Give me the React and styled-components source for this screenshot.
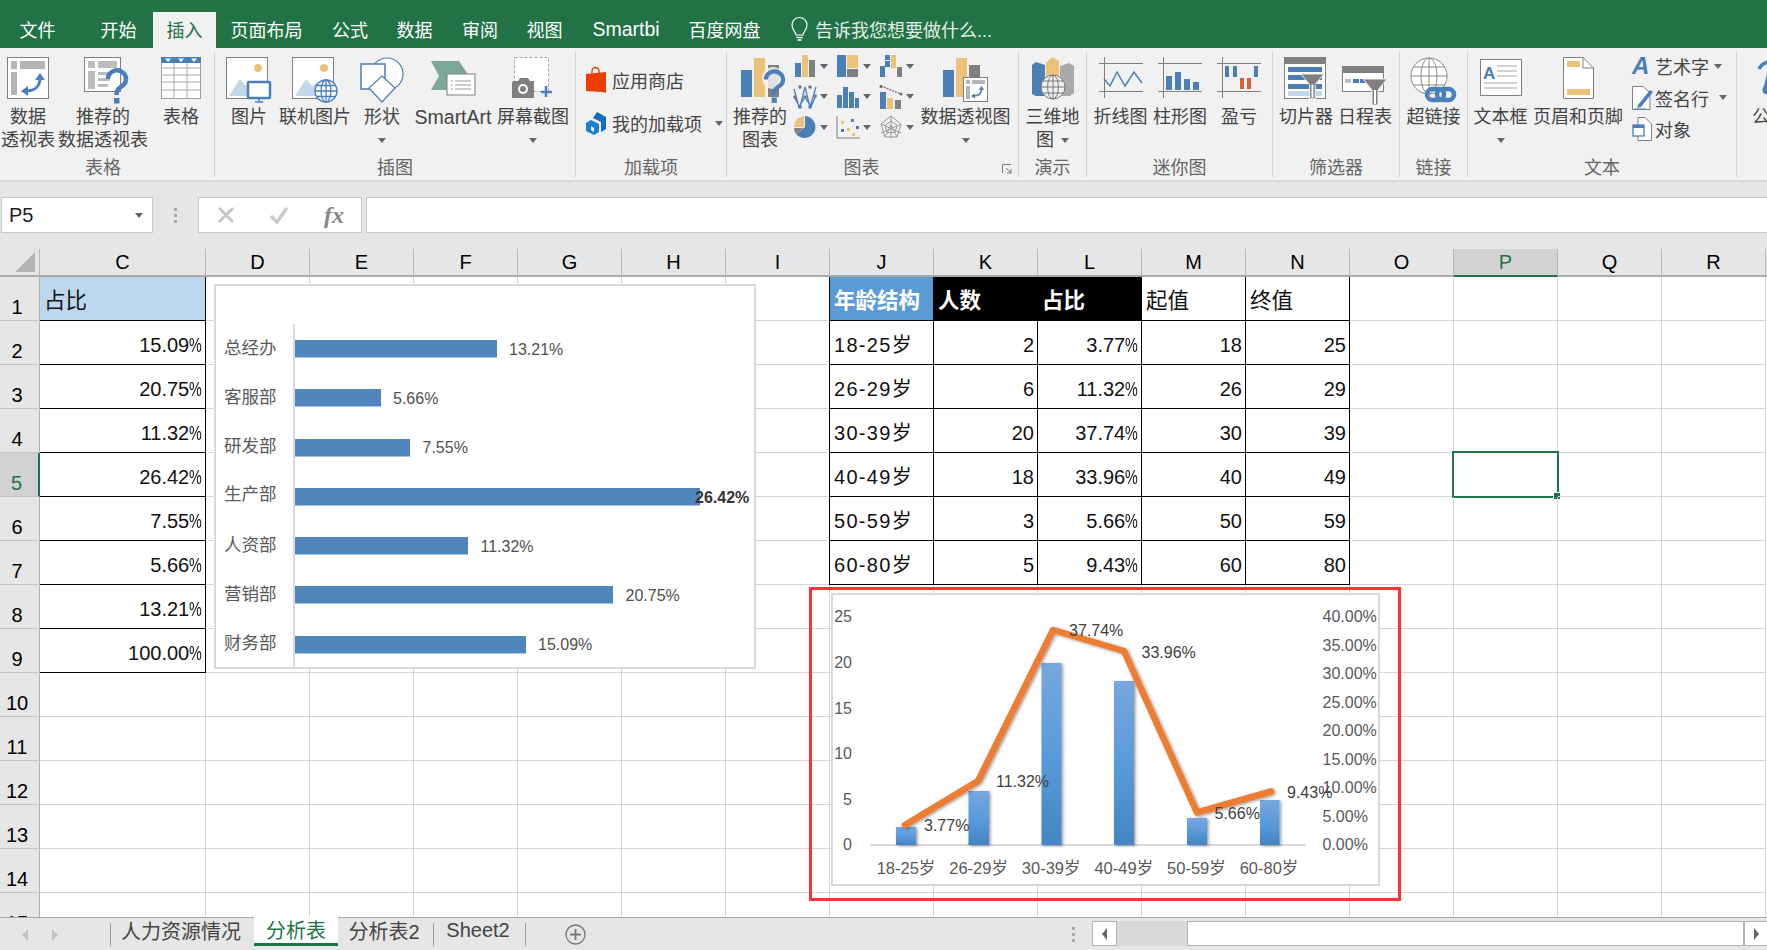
import React from 'react';
import styled, { createGlobalStyle } from 'styled-components';

const FONT = `"Liberation Sans","Noto Sans CJK SC",sans-serif`;
const GREEN = '#217346';
const BLUE = '#4a7fb8';
const TAN = '#ecc278';
const GRAY = '#7f7f7f';
const LIGHT = '#c3d6ea';

const Global = createGlobalStyle`
  html, body { margin: 0; padding: 0; height: 100%; overflow: hidden; background: #fff; }
  body { font-family: ${FONT}; }
  #root { height: 100%; }
`;

const Page = styled.div`
  width: 1767px; height: 950px; display: flex; flex-direction: column; overflow: hidden;
`;

/* ---- title tabs ---- */
const TabStrip = styled.div`
  height: 48px; flex: none; background: ${GREEN}; display: flex; align-items: flex-end;
`;
const MenuTab = styled.div`
  height: 36px; width: ${p => p.$w}px; padding-left: ${p => p.$pad || 0}px; box-sizing: border-box;
  display: flex; align-items: center; justify-content: center; font-size: ${p => (p.$latin ? 19.5 : 18)}px; padding-bottom: ${p => (p.$latin ? 2 : 3)}px;
  color: ${p => (p.$active ? GREEN : '#fff')};
  background: ${p => (p.$active ? '#f1f1f1' : 'transparent')};
`;
const TellMe = styled.div`
  margin-left: 19px; height: 36px; padding-bottom: 2px; box-sizing: border-box; display: flex; align-items: center; gap: 7px;
  color: #e3eee8; font-size: 18px; white-space: nowrap;
`;

/* ---- ribbon ---- */
const Ribbon = styled.div`
  height: 134px; flex: none; box-sizing: border-box; background: #f1f1f1; border-bottom: 2px solid #d8d8d8;
  padding: 4px 0 3px; display: flex; overflow: hidden; color: #444;
`;
const Group = styled.div`
  width: ${p => p.$w}px; flex: none; box-sizing: border-box; display: flex; flex-direction: column;
  border-right: ${p => (p.$last ? 'none' : '1.5px solid #d4d4d4')}; position: relative;
`;
const GroupBody = styled.div`
  flex: 1; display: flex; padding-left: ${p => p.$pad || 0}px; min-height: 0;
`;
const GroupLabel = styled.div`
  height: 28px; font-size: 18px; line-height: 1; color: #666; display: flex; align-items: center; justify-content: center;
  padding-right: ${p => p.$shift || 0}px; padding-top: 9px; box-sizing: border-box; flex: none;
`;
const Launcher = styled.svg`
  position: absolute; right: 6px; bottom: 3px;
`;
const Item = styled.div`
  width: ${p => p.$w}px; flex: none; display: flex; flex-direction: column; align-items: center;
  padding-top: 5px; box-sizing: border-box;
`;
const IconSlot = styled.div`
  height: 49px; display: flex; align-items: flex-start; justify-content: center; flex: none;
`;
const ItemLine = styled.div`
  height: 23px; line-height: 23px; font-size: ${p => (p.$latin ? 19.5 : 18)}px; white-space: nowrap; display: flex; align-items: center; gap: 7px;
  flex: none;
`;
const Caret = styled.span`
  display: inline-block; width: 0; height: 0; flex: none;
  border-left: 4px solid transparent; border-right: 4px solid transparent; border-top: 5px solid #666;
`;
const AddinStack = styled.div`
  display: flex; flex-direction: column; gap: 13px; padding-top: 13px;
`;
const SideRow = styled.div`
  height: 30px; display: flex; align-items: center; gap: 5px; font-size: 18px; white-space: nowrap;
`;
const SideCaret = styled(Caret)`
  margin-left: ${p => p.$gap || 8}px;
`;
const TextStack = styled.div`
  display: flex; flex-direction: column; gap: 3.5px; padding-left: 9px;
`;
const TextRow = styled.div`
  height: 28px; display: flex; align-items: center; font-size: 18px; white-space: nowrap;
`;
const TextIcon = styled.div`
  width: 23px; margin-right: 0; flex: none; display: flex; justify-content: flex-start;
`;
const ChartGrid = styled.div`
  width: 129px; flex: none; display: grid; grid-template-columns: repeat(3, 43px); grid-auto-rows: 30.5px;
  margin-top: -1px;
`;
const ChartCell = styled.div`
  display: flex; align-items: center; gap: 3px;
`;

/* ---- formula bar ---- */
const FormulaBand = styled.div`
  height: 67px; flex: none; box-sizing: border-box; background: #e6e6e6; padding: 15px 0 16px 1px; display: flex;
`;
const NameBox = styled.div`
  width: 152px; box-sizing: border-box; background: #fff; border: 1px solid #c8c8c8; font-size: 20px; color: #222;
  display: flex; align-items: center; justify-content: space-between; padding: 0 9px 0 7px;
`;
const BarDots = styled.div`
  width: 45px; display: flex; flex-direction: column; align-items: center; justify-content: center; gap: 3px;
`;
const BarDot = styled.i`
  width: 3px; height: 3px; background: #a8a8a8; display: block;
`;
const FxBox = styled.div`
  width: 164px; box-sizing: border-box; background: #fff; border: 1px solid #c8c8c8; display: flex; align-items: center;
  padding-left: 19px; gap: 35px; margin-right: 4px;
`;
const FxLabel = styled.span`
  font-family: "Liberation Serif", serif; font-style: italic; font-weight: 700; font-size: 24px; color: #888;
`;
const FormulaInput = styled.div`
  flex: 1; background: #fff; border: 1px solid #c8c8c8; border-right: none;
`;

/* ---- column headers ---- */
const ColumnBar = styled.div`
  height: 28px; flex: none; box-sizing: border-box; display: flex; background: #e6e6e6; border-bottom: 2px solid #a9a9a9;
`;
const Corner = styled.div`
  width: 40px; flex: none; box-sizing: border-box; border-right: 1px solid #b8b8b8; display: flex; align-items: flex-end;
  justify-content: flex-end; padding: 0 4px 3px 0;
`;
const ColHead = styled.div`
  width: ${p => p.$w}px; flex: none; box-sizing: border-box; display: flex; align-items: center; justify-content: center;
  font-size: 20px; border-right: 1px solid #b8b8b8; margin-bottom: ${p => (p.$sel ? '-2px' : '0')};
  color: ${p => (p.$sel ? GREEN : '#000')}; background: ${p => (p.$sel ? '#d2d2d2' : 'transparent')};
  border-bottom: ${p => (p.$sel ? `2px solid ${GREEN}` : 'none')};
`;

/* ---- sheet ---- */
const Sheet = styled.div`
  position: relative; flex: 1; min-height: 0; overflow: hidden; background: #fff;
`;
const Grid = styled.div`
  display: grid; grid-template-columns: 40px 166px repeat(15, 104px); grid-auto-rows: 44px;
`;
const RowHead = styled.div`
  box-sizing: border-box; background: ${p => (p.$sel ? '#d2d2d2' : '#e6e6e6')}; color: ${p => (p.$sel ? GREEN : '#000')};
  border-bottom: 1px solid #c4c4c4; border-right: ${p => (p.$sel ? `2px solid ${GREEN}` : '1px solid #b0b0b0')};
  font-size: 20px; line-height: 20px; display: flex; align-items: flex-end; justify-content: center; padding: 0 5px 3px 0;
`;
const Cell = styled.div`
  box-sizing: border-box; position: relative; font-size: 20px; white-space: nowrap; overflow: visible;
  display: flex; align-items: center; padding: ${p => (p.$head ? 0 : p.$spaced ? 2 : 6)}px 3px 0 4px;
  justify-content: ${p => (p.$right ? 'flex-end' : 'flex-start')};
  background: ${p => p.$fill || 'transparent'}; color: ${p => p.$color || '#111'};
  font-weight: ${p => (p.$bold ? 700 : 400)};
  letter-spacing: ${p => (p.$spaced ? '1.3px' : '0')};
  border-right: 1px solid ${p => (p.$box ? '#000' : '#d6d6d6')};
  border-bottom: 1px solid ${p => (p.$box ? '#000' : '#d6d6d6')};
  box-shadow: ${p => (p.$edge ? '-1px 0 0 #000' : 'none')};
`;
const HeadText = styled.span`
  font-size: 21.5px;
`;
const Pct = styled.span`
  display: inline-block; transform: scaleX(0.72); transform-origin: right center; margin-left: -5px;
`;
const Selection = styled.div`
  position: absolute; left: -2px; top: -2px; right: -2px; bottom: -2px; border: 2px solid ${GREEN};
`;
const Handle = styled.div`
  position: absolute; right: -4px; bottom: -4px; width: 6px; height: 6px; background: ${GREEN}; border: 1px solid #fff;
`;
const BarCard = styled.div`
  position: absolute; left: 214px; top: 7px; width: 542px; height: 385px; box-sizing: border-box;
  background: #fff; border: 2px solid #d9d9d9;
`;
const RedFrame = styled.div`
  position: absolute; left: 809px; top: 310px; width: 592px; height: 314px; box-sizing: border-box;
  border: 3px solid #ff3333; padding: 3px 18px 12px 19px; display: flex;
`;
const ComboCard = styled.div`
  flex: 1; box-sizing: border-box; background: #fff; border: 2px solid #d9d9d9;
`;
const ChartSvg = styled.svg`
  display: block;
`;
const ChartText = styled.text`
  font-family: ${FONT}; font-size: ${p => p.$size || 16}px; fill: ${p => p.$fill || '#595959'};
  font-weight: ${p => (p.$bold ? 700 : 400)}; dominant-baseline: central;
`;

/* ---- bottom bar ---- */
const BottomBar = styled.div`
  height: 33px; flex: none; box-sizing: border-box; background: #e6e6e6; border-top: 1px solid #a9a9a9; display: flex;
  align-items: flex-start;
`;
const TabNav = styled.div`
  width: 110px; height: 29px; flex: none; box-sizing: border-box; display: flex; align-items: center; padding: 5px 0 0 22px; gap: 24px;
`;
const NavArrow = styled.i`
  display: block; width: 0; height: 0; border-top: 6px solid transparent; border-bottom: 6px solid transparent;
  ${p => (p.$right ? 'border-left: 6px solid #c4c4c4;' : 'border-right: 6px solid #c4c4c4;')}
`;
const SheetTab = styled.div`
  width: ${p => p.$w}px; flex: none; box-sizing: border-box; height: 29px; display: flex; align-items: center; justify-content: center;
  font-size: 20px; padding-bottom: ${p => (p.$active ? 1 : 5)}px; padding-right: ${p => (p.$active ? 0 : 3)}px; white-space: nowrap;
  color: ${p => (p.$active ? GREEN : '#444')}; background: ${p => (p.$active ? '#fff' : 'transparent')};
  border-bottom: ${p => (p.$active ? `3px solid ${GREEN}` : 'none')};
  margin-top: ${p => (p.$active ? '-1px' : '0')}; 
`;
const TabRule = styled.i`
  display: block; width: 1px; height: 23px; margin-top: 5px; background: #9d9d9d; flex: none;
`;
const AddSheet = styled.svg`
  margin: 6px 0 0 39px; flex: none;
`;
const ScrollArea = styled.div`
  margin-left: auto; display: flex; align-items: flex-start; height: 100%;
`;
const ScrollDots = styled.div`
  width: 38px; display: flex; flex-direction: column; align-items: center; gap: 3px; margin-top: 9px; padding-right: 0;
`;
const ScrollTrack = styled.div`
  width: 675px; height: 25px; margin-top: 3px; display: flex; box-sizing: border-box;
`;
const ScrollBtn = styled.div`
  width: ${p => p.$w}px; flex: none; box-sizing: border-box; background: #fff; border: 1px solid #b4b4b4; display: flex;
  align-items: center; justify-content: center; border-right-width: ${p => (p.$end ? 0 : 1)}px;
`;
const ScrollThumb = styled.div`
  width: 70px; flex: none; background: #d9d9d9;
`;
const ScrollRest = styled.div`
  flex: 1; background: #fff; border: 1px solid #b4b4b4;
`;
const ScrollArrow = styled.i`
  display: block; width: 0; height: 0; border-top: 6px solid transparent; border-bottom: 6px solid transparent;
  ${p => (p.$right ? 'border-left: 5px solid #666;' : 'border-right: 5px solid #666;')}
`;

/* ---- icons ---- */
const Sv = ({ w, h, children }) => (
  <svg width={w} height={h} viewBox={`0 0 ${w} ${h}`} fill="none" overflow="visible">{children}</svg>
);
const Globe = ({ cx, cy, r, stroke, fill = '#fff', sw = 1 }) => (
  <g stroke={stroke} strokeWidth={sw} fill="none">
    <circle cx={cx} cy={cy} r={r} fill={fill} />
    <ellipse cx={cx} cy={cy} rx={r * 0.45} ry={r} />
    <path d={`M${cx} ${cy - r}V${cy + r}M${cx - r} ${cy}H${cx + r}M${cx - r * 0.85} ${cy - r * 0.5}H${cx + r * 0.85}M${cx - r * 0.85} ${cy + r * 0.5}H${cx + r * 0.85}`} />
  </g>
);
const Swap = ({ x = 0, y = 0, s = 1 }) => (
  <g transform={`translate(${x} ${y}) scale(${s})`}>
    <path d="M19 5C19 13 14 18 5 18" stroke={BLUE} strokeWidth="3" />
    <path d="M19 0l5 7H14zM0 18l7-5v10z" fill={BLUE} />
  </g>
);
const PivotIcon = () => (
  <Sv w={42} h={43}>
    <rect x=".5" y=".5" width="41" height="41" fill="#fff" stroke={GRAY} />
    <path d="M4 4h6v8H4zM13 4h25v8H13zM4 15h6v23H4z" fill="#b5b5b5" />
    <Swap x={14} y={16} />
  </Sv>
);
const Question = ({ x = 0, y = 0, s = 1 }) => (
  <g transform={`translate(${x} ${y}) scale(${s})`}>
    <path d="M2 10a9 8.5 0 1 1 14 7c-4 3-5.500 4-5.500 9" stroke={BLUE} strokeWidth="4.500" />
    <rect x="8" y="29" width="5.500" height="5.500" fill={BLUE} />
  </g>
);
const RecPivotIcon = () => (
  <Sv w={38} h={45}>
    <rect x=".5" y=".5" width="36" height="34" fill="#fff" stroke={GRAY} />
    <path d="M4 4h7v7H4zM14 4h19v7H14zM4 14h7v18H4zM14 15h14v3H14zM14 21h12v3H14zM14 27h10v3H14z" fill="#bcbcbc" />
    <Question x={22} y={12} />
  </Sv>
);
const TableIcon = () => (
  <Sv w={40} h={43}>
    <rect x=".5" y=".5" width="39" height="41" fill="#fff" stroke="#9a9a9a" />
    <path d="M0 11H40M0 18H40M0 25H40M0 33H40M13 6V42M26 6V42" stroke="#a8a8a8" />
    <rect width="40" height="6" fill={BLUE} />
    <path d="M4 1.500h6l-3 3.500zM17 1.500h6l-3 3.500zM30 1.500h6l-3 3.500z" fill="#fff" />
  </Sv>
);
const PhotoBase = () => (
  <>
    <rect x=".5" y=".5" width="41" height="41" fill="#fff" stroke={GRAY} />
    <circle cx="32" cy="11" r="4" fill={TAN} />
    <path d="M3 39l11-17 6 7 5-4 12 14z" fill={LIGHT} />
  </>
);
const PictureIcon = () => (
  <Sv w={46} h={46}>
    <PhotoBase />
    <rect x="22" y="25" width="22" height="16" rx="1" fill="#fff" stroke={BLUE} strokeWidth="2.500" />
    <path d="M33 41v3M29 45h8" stroke={BLUE} strokeWidth="1.500" />
  </Sv>
);
const OnlineIcon = () => (
  <Sv w={46} h={46}>
    <PhotoBase />
    <Globe cx={34} cy={34} r={11} stroke={BLUE} sw={1.300} />
  </Sv>
);
const ShapesIcon = () => (
  <Sv w={45} h={45}>
    <circle cx="27" cy="17" r="16" fill="#fff" stroke={BLUE} strokeWidth="1.200" />
    <rect x="1" y="7" width="24" height="25" fill="#fff" stroke={BLUE} strokeWidth="1.500" />
    <path d="M22 19l13 12-13 14-13-14z" fill="#fff" stroke={BLUE} strokeWidth="1.200" />
  </Sv>
);
const SmartArtIcon = () => (
  <Sv w={45} h={40}>
    <path d="M0 4h28l10 15H32v14H0l8-14z" fill="#7ba898" />
    <rect x="16" y="17" width="28" height="21" fill="#fff" stroke={GRAY} />
    <path d="M20 24h2M24 24h16M20 28h2M24 28h16M20 32h2M24 32h16" stroke="#9a9a9a" />
  </Sv>
);
const ScreenshotIcon = () => (
  <Sv w={42} h={42}>
    <rect x="2.500" y=".5" width="34" height="34" fill="#fff" stroke="#a8a8a8" strokeDasharray="3 2" />
    <path d="M0 26a2 2 0 0 1 2-2h4l2-3h8l2 3h4v17H0z" fill="#808080" />
    <circle cx="11" cy="32" r="5" fill="#fff" />
    <circle cx="11" cy="32" r="3" fill="#808080" />
    <path d="M34 29V40M29 35H40" stroke={BLUE} strokeWidth="2.500" />
  </Sv>
);
const StoreIcon = () => (
  <Sv w={21} h={26}>
    <path d="M0 7l20-2v21l-4-1-16-1z" fill="#ea3e00" />
    <path d="M6 7V4a3.500 3.500 0 0 1 7 0v3" stroke="#ea3e00" strokeWidth="1.300" />
  </Sv>
);
const AddinIcon = () => (
  <Sv w={21} h={23}>
    <path d="M11 0l9 5v12l-5 3V10L7 6z" fill="#0f6cbd" />
    <path d="M5 8l8 4v8l-5 3-8-4v-8z" fill="#1a7fd0" />
    <path d="M5 14l3 2v4l-3-2z" fill="#f1f1f1" />
  </Sv>
);
const RecChartIcon = () => (
  <Sv w={40} h={46}>
    <rect x="1" y="13" width="11" height="27" fill={BLUE} />
    <rect x="14" y="1" width="11" height="39" fill={TAN} />
    <rect x="28" y="8" width="11" height="32" fill={GRAY} />
    <circle cx="33" cy="21" r="11" fill="#f1f1f1" opacity=".85" />
    <Question x={24} y={13} s={0.95} />
  </Sv>
);
const ColChart = () => (
  <Sv w={24} h={24}>
    <rect x="2" y="9" width="6" height="14" fill={BLUE} /><rect x="9" y="1" width="6" height="22" fill={TAN} /><rect x="16" y="6" width="6" height="17" fill={GRAY} />
  </Sv>
);
const TreeChart = () => (
  <Sv w={24} h={24}>
    <rect x="1" y="1" width="9" height="22" fill={BLUE} /><rect x="11" y="1" width="11" height="13" fill={TAN} /><rect x="11" y="15" width="11" height="8" fill={GRAY} />
  </Sv>
);
const FallChart = () => (
  <Sv w={24} h={24}>
    <rect x="1" y="12" width="5" height="11" fill={BLUE} /><rect x="6" y="7" width="5" height="6" fill={BLUE} /><rect x="6" y="1" width="5" height="5" fill={BLUE} /><rect x="12" y="1" width="5" height="13" fill={TAN} /><rect x="18" y="13" width="5" height="10" fill={GRAY} />
  </Sv>
);
const LinkChart = () => (
  <Sv w={24} h={24}>
    <path d="M1 12l6 10 5-20 5 20 6-20M1 4l5 18 6-10 6 10 5-12" stroke={BLUE} strokeWidth="1.300" />
    <g fill="#777"><circle cx="2" cy="12" r="1.800" /><circle cx="7" cy="2" r="1.800" /><circle cx="17" cy="2" r="1.800" /><circle cx="22" cy="11" r="1.800" /><circle cx="12" cy="12" r="1.800" /></g>
    <g fill={BLUE}><circle cx="7" cy="22" r="1.800" /><circle cx="17" cy="22" r="1.800" /></g>
  </Sv>
);
const HistChart = () => (
  <Sv w={24} h={24}>
    <rect x="1" y="10" width="5" height="13" fill={BLUE} /><rect x="7" y="2" width="5" height="21" fill={BLUE} /><rect x="13" y="7" width="5" height="16" fill={BLUE} /><rect x="19" y="13" width="4" height="10" fill={BLUE} />
  </Sv>
);
const ParetoChart = () => (
  <Sv w={24} h={24}>
    <rect x="1" y="7" width="6" height="17" fill={BLUE} /><rect x="8" y="13" width="6" height="11" fill={TAN} /><rect x="16" y="15" width="6" height="9" fill={GRAY} />
    <path d="M2 1L22 9" stroke="#666" strokeWidth="1.200" strokeDasharray="2 1" />
    <circle cx="2" cy="1.500" r="1.500" fill="#666" /><circle cx="22" cy="9" r="1.500" fill="#666" />
  </Sv>
);
const PieChart = () => (
  <Sv w={24} h={24}>
    <path d="M12 1a11 11 0 1 1-9 18l9-7z" fill={BLUE} />
    <path d="M11 1A11 11 0 0 0 1 12h10z" fill={TAN} />
    <path d="M1 13h9l-7 6a11 11 0 0 1-2-6z" fill={GRAY} />
  </Sv>
);
const ScatterChart = () => (
  <Sv w={24} h={24}>
    <path d="M1 1V23H24" stroke={GRAY} />
    <g fill={TAN}><rect x="5" y="6" width="3" height="3" /><rect x="11" y="13" width="3" height="3" /><rect x="16" y="18" width="3" height="3" /></g>
    <g fill={BLUE}><rect x="15" y="4" width="3" height="3" /><rect x="5" y="14" width="3" height="3" /><rect x="20" y="11" width="3" height="3" /></g>
  </Sv>
);
const RadarChart = () => (
  <Sv w={24} h={24}>
    <g stroke="#999" strokeWidth="1">
      <path d="M12 1l10 8-4 13H6L2 9z" />
      <path d="M12 6l6 4.500-2 7H8l-2-7z" />
      <path d="M12 1v22M2 9l20 9M22 9L2 18M6 22L12 10l6 12" />
    </g>
  </Sv>
);
const PivotChartIcon = () => (
  <Sv w={46} h={46}>
    <rect x="0" y="13" width="11" height="27" fill={BLUE} />
    <rect x="13" y="1" width="11" height="39" fill={TAN} />
    <rect x="26" y="8" width="11" height="32" fill={GRAY} />
    <rect x="20.500" y="20.500" width="24" height="24" fill="#fff" stroke={GRAY} />
    <path d="M23 23h4v4h-4zM29 23h13v4H29zM23 29h4v13h-4z" fill="#b5b5b5" />
    <Swap x={28} y={29} s={0.55} />
  </Sv>
);
const MapIcon = () => (
  <Sv w={42} h={43}>
    <path d="M0 8l4-3 9 3v31H4l-4-2z" fill={BLUE} />
    <path d="M14 6l6-6 7 4v27H14z" fill={TAN} />
    <path d="M28 9l9-3 5 3v27l-4 3H28z" fill="#a9a9a9" />
    <Globe cx={21} cy={30} r={12} stroke="#777" fill="#f1f1f1" />
  </Sv>
);
const SparkFrame = () => (
  <path d="M0 6.500H44M0 34.500H44M5.500 0V41" stroke={GRAY} />
);
const LineSpark = () => (
  <Sv w={44} h={42}>
    <SparkFrame />
    <path d="M5 22l6 7 7-14 8 14 9-14 8 11" stroke={BLUE} strokeWidth="1.500" />
  </Sv>
);
const ColSpark = () => (
  <Sv w={44} h={42}>
    <SparkFrame />
    <path d="M8 19h6v14H8zM17 15h6v18h-6zM26 22h6v11h-6zM35 25h6v8h-6z" fill={BLUE} />
  </Sv>
);
const WinSpark = () => (
  <Sv w={44} h={42}>
    <SparkFrame />
    <path d="M8 9h4v11H8zM16 9h4v11h-4zM37 9h4v11h-4z" fill={BLUE} />
    <path d="M23 21h4v11h-4zM30 21h4v11h-4z" fill="#d9603b" />
  </Sv>
);
const Funnel = ({ x, y, s = 1 }) => (
  <g transform={`translate(${x} ${y}) scale(${s})`}>
    <path d="M0 0H24L15 11V26H9V11z" fill={GRAY} stroke="#f1f1f1" />
    <path d="M11 11V25H13V11z" fill="#fff" />
  </g>
);
const SlicerIcon = () => (
  <Sv w={44} h={43}>
    <rect x=".5" y=".5" width="41" height="41" fill="#fff" stroke={GRAY} />
    <rect width="42" height="7" fill={GRAY} />
    <path d="M4 10h34v5H4zM4 18h34v5H4zM4 27h34v5H4z" fill={BLUE} />
    <rect x="4" y="34" width="34" height="5" fill={LIGHT} />
    <Funnel x={17} y={17} s={0.95} />
  </Sv>
);
const TimelineIcon = () => (
  <Sv w={46} h={47}>
    <rect x=".5" y="9.500" width="41" height="25" fill="#fff" stroke={GRAY} />
    <rect y="9" width="42" height="7" fill={GRAY} />
    <path d="M3 22h6v4H3zM26 22h6v4h-6zM34 22h6v4h-6z" fill="#bcbcbc" />
    <path d="M11 22h6v4h-6zM18 22h6v4h-6z" fill={BLUE} />
    <Funnel x={21} y={22} />
  </Sv>
);
const LinkIcon = () => (
  <Sv w={48} h={47}>
    <Globe cx={19} cy={19} r={18} stroke="#8a8a8a" fill="#fff" />
    <g stroke={BLUE} strokeWidth="4.500" fill="none">
      <rect x="17" y="32" width="17" height="11" rx="5.500" />
      <rect x="27" y="32" width="17" height="11" rx="5.500" />
    </g>
  </Sv>
);
const IconLetter = styled.text`
  font-family: ${FONT}; font-weight: 700; fill: ${BLUE}; font-size: ${p => p.$size}px;
  font-style: ${p => (p.$italic ? 'italic' : 'normal')};
`;
const TextBoxIcon = () => (
  <Sv w={42} h={42}>
    <rect x=".5" y="2.500" width="41" height="36" fill="#fff" stroke={GRAY} />
    <IconLetter x="3" y="22" $size={17}>A</IconLetter>
    <path d="M17 9H37M17 14H37M17 19H37M4 26H37M4 31H37" stroke="#a5a5a5" />
  </Sv>
);
const HeaderFooterIcon = () => (
  <Sv w={31} h={43}>
    <path d="M.5.5H20L30.500 11V41.500H.5z" fill="#fff" stroke={GRAY} />
    <path d="M20 .5V11H30.500" stroke={GRAY} />
    <rect x="4" y="4" width="13" height="6" fill={TAN} />
    <rect x="4" y="32" width="23" height="6" fill={TAN} />
  </Sv>
);
const ArtIcon = () => (
  <Sv w={20} h={24}>
    <IconLetter x="0" y="20" $size={24} $italic>A</IconLetter>
  </Sv>
);
const SignIcon = () => (
  <Sv w={22} h={24}>
    <path d="M.5.5H11L18 7V23.500H.5z" fill="#fff" stroke={GRAY} />
    <path d="M6 19L18 4l3 2L9 21l-4 1z" fill={BLUE} />
    <path d="M2 23H14" stroke={BLUE} />
  </Sv>
);
const ObjectIcon = () => (
  <Sv w={20} h={24}>
    <path d="M6 .5H13L19.500 7V23.500H6z" fill="#fff" stroke={GRAY} />
    <rect x="1" y="8" width="11" height="11" fill="#fff" stroke={BLUE} strokeWidth="1.300" />
    <rect x="1" y="8" width="11" height="3" fill={BLUE} />
  </Sv>
);
const PiSlot = styled.div`
  align-self: flex-start; width: 20px;
`;
const PiIcon = () => (
  <PiSlot>
    <Sv w={20} h={40}>
      <path d="M-1 12C2 6 6 5 10 5L18 4" stroke={BLUE} strokeWidth="3.500" />
      <path d="M11 6C9 18 7 28 5 32c-1 3 2 4 4 2" stroke={BLUE} strokeWidth="4.500" />
    </Sv>
  </PiSlot>
);
const BulbIcon = () => (
  <Sv w={17} h={23}>
    <path d="M5 17c0-3-4-5-4-10a7.500 7.500 0 0 1 15 0c0 5-4 7-4 10z" stroke="#fff" strokeWidth="1.200" />
    <path d="M5.500 19.500h6M6.500 22h4" stroke="#fff" strokeWidth="1.500" />
  </Sv>
);
const CrossIcon = () => (
  <Sv w={16} h={16}><path d="M1 1L15 15M15 1L1 15" stroke="#c2c2c2" strokeWidth="2.500" /></Sv>
);
const CheckIcon = () => (
  <Sv w={20} h={18}><path d="M2 10l6 6L18 2" stroke="#c8c8c8" strokeWidth="3.500" /></Sv>
);

/* ---- data ---- */
const COLS = ['C', 'D', 'E', 'F', 'G', 'H', 'I', 'J', 'K', 'L', 'M', 'N', 'O', 'P', 'Q', 'R'];
const shares = ['15.09%', '20.75%', '11.32%', '26.42%', '7.55%', '5.66%', '13.21%', '100.00%'];
const ages = [
  ['18-25岁', '2', '3.77%', '18', '25'],
  ['26-29岁', '6', '11.32%', '26', '29'],
  ['30-39岁', '20', '37.74%', '30', '39'],
  ['40-49岁', '18', '33.96%', '40', '49'],
  ['50-59岁', '3', '5.66%', '50', '59'],
  ['60-80岁', '5', '9.43%', '60', '80'],
];
const Value = ({ v }) => (v.endsWith('%') ? <span>{v.slice(0, -1)}<Pct>%</Pct></span> : v);

const cellFor = (c, r) => {
  if (c === 'C' && r <= 9) {
    if (r === 1) return { $box: true, $head: true, $fill: '#bdd7ee', text: <HeadText>占比</HeadText> };
    return { $box: true, $right: true, text: <Value v={shares[r - 2]} /> };
  }
  const idx = ['J', 'K', 'L', 'M', 'N'].indexOf(c);
  if (idx >= 0 && r <= 7) {
    const $edge = idx === 0;
    if (r === 1) {
      const label = ['年龄结构', '人数', '占比', '起值', '终值'][idx];
      const fill = idx === 0 ? '#5b9bd5' : idx < 3 ? '#000' : undefined;
      return { $box: true, $head: true, $edge, $fill: fill, $color: idx < 3 ? '#fff' : '#111', $bold: idx < 3, text: <HeadText>{label}</HeadText> };
    }
    const v = ages[r - 2][idx];
    if (idx === 0) return { $box: true, $edge, $spaced: true, text: v };
    return { $box: true, $right: true, text: <Value v={v} /> };
  }
  return {};
};

const hbars = [
  ['总经办', 497, 340, 348, '13.21%', 509, 349.5],
  ['客服部', 381, 389, 397, '5.66%', 393, 398],
  ['研发部', 410, 439, 446, '7.55%', 422.5, 447.5],
  ['生产部', 700, 488, 494, '26.42%', 695, 497],
  ['人资部', 468, 537, 545, '11.32%', 480.5, 546.5],
  ['营销部', 613, 586, 594, '20.75%', 625.5, 595.5],
  ['财务部', 526, 636, 643, '15.09%', 538, 644],
];

const BarChart = () => (
  <ChartSvg width="538" height="381" viewBox="216 286 538 381">
    <path d="M294 324V668" stroke="#d9d9d9" strokeWidth="2" />
    {hbars.map(([name, end, top, ly, val, vx, vy]) => (
      <g key={name}>
        <ChartText x="224" y={ly} $size={17.500}>{name}</ChartText>
        <rect x="295" y={top} width={end - 295} height="17.500" fill="#4f87bc" />
        <ChartText x={vx} y={vy} $bold={val === '26.42%'} $fill={val === '26.42%' ? '#333' : '#505050'}>{val}</ChartText>
      </g>
    ))}
  </ChartSvg>
);

const colBars = [[896, 20, 827], [968.5, 20.5, 791], [1041.5, 20, 663], [1114, 20, 681], [1187, 20, 818], [1260, 19.5, 800]];
const leftTicks = [['25', 616.5], ['20', 662.5], ['15', 708], ['10', 753.5], ['5', 799], ['0', 844.5]];
const rightTicks = ['40.00%', '35.00%', '30.00%', '25.00%', '20.00%', '15.00%', '10.00%', '5.00%', '0.00%'];
const xLabels = ['18-25岁', '26-29岁', '30-39岁', '40-49岁', '50-59岁', '60-80岁'];
const dataLabels = [['3.77%', 924, 825], ['11.32%', 996, 781.5], ['37.74%', 1069, 630], ['33.96%', 1141.5, 652], ['5.66%', 1214.5, 813], ['9.43%', 1287, 792]];

const ComboChart = () => (
  <ChartSvg width="545" height="289" viewBox="833 595 545 289">
    <defs>
      <linearGradient id="barFill" x1="0" y1="0" x2="0" y2="1">
        <stop offset="0" stopColor="#76a7dc" />
        <stop offset=".5" stopColor="#5a9bdb" />
        <stop offset="1" stopColor="#4485c3" />
      </linearGradient>
      <filter id="soft" x="-30%" y="-10%" width="170%" height="130%">
        <feDropShadow dx="1.500" dy="1" stdDeviation="1.500" floodOpacity=".4" />
      </filter>
    </defs>
    {leftTicks.map(([t, y]) => <ChartText key={t} x="852" y={y} textAnchor="end">{t}</ChartText>)}
    {rightTicks.map((t, i) => <ChartText key={t} x="1322.500" y={616.5 + i * 28.500}>{t}</ChartText>)}
    <path d="M870 845H1306" stroke="#d9d9d9" strokeWidth="2" />
    {colBars.map(([x, w, top]) => (
      <rect key={x} x={x} y={top} width={w} height={845 - top} fill="url(#barFill)" filter="url(#soft)" />
    ))}
    <polyline points="905,825 978,781 1053,630 1124,651 1197,812.500 1271,791.500" fill="none" stroke="#ed7d31" strokeWidth="6.500" strokeLinecap="round" strokeLinejoin="round" filter="url(#soft)" />
    {xLabels.map((t, i) => <ChartText key={t} x={906 + i * 72.600} y="868" textAnchor="middle" $size={16.500}>{t}</ChartText>)}
    {dataLabels.map(([t, x, y]) => <ChartText key={t} x={x} y={y} $fill="#404040">{t}</ChartText>)}
  </ChartSvg>
);

const smallCharts = [ColChart, TreeChart, FallChart, LinkChart, HistChart, ParetoChart, PieChart, ScatterChart, RadarChart];
const menu = [['文件', 75], ['开始', 78, 9], ['插入', 63, 0, true], ['页面布局', 101], ['公式', 66], ['数据', 63], ['审阅', 68], ['视图', 61], ['Smartbi', 102, 0, false, true], ['百度网盘', 95]];

const Btn = ({ w, icon, lines, caret }) => (
  <Item $w={w}>
    <IconSlot>{icon}</IconSlot>
    {lines.map(l => <ItemLine key={l} $latin={/^[A-Za-z]/.test(l)}>{l}{caret === l && <Caret />}</ItemLine>)}
    {caret === true && <ItemLine><Caret /></ItemLine>}
  </Item>
);

export default function App() {
  return (
    <Page>
      <Global />
      <TabStrip>
        {menu.map(([t, w, pad, active, latin]) => <MenuTab key={t} $w={w} $pad={pad} $active={active} $latin={latin}>{t}</MenuTab>)}
        <TellMe><BulbIcon />告诉我您想要做什么...</TellMe>
      </TabStrip>

      <Ribbon>
        <Group $w={215}>
          <GroupBody>
            <Btn w={56} icon={<PivotIcon />} lines={['数据', '透视表']} />
            <Btn w={94} icon={<RecPivotIcon />} lines={['推荐的', '数据透视表']} />
            <Btn w={62} icon={<TableIcon />} lines={['表格']} />
          </GroupBody>
          <GroupLabel $shift={8}>表格</GroupLabel>
        </Group>
        <Group $w={361}>
          <GroupBody $pad={1}>
            <Btn w={66} icon={<PictureIcon />} lines={['图片']} />
            <Btn w={66} icon={<OnlineIcon />} lines={['联机图片']} />
            <Btn w={68} icon={<ShapesIcon />} lines={['形状']} caret />
            <Btn w={74} icon={<SmartArtIcon />} lines={['SmartArt']} />
            <Btn w={86} icon={<ScreenshotIcon />} lines={['屏幕截图']} caret />
          </GroupBody>
          <GroupLabel>插图</GroupLabel>
        </Group>
        <Group $w={151}>
          <GroupBody $pad={10}>
            <AddinStack>
              <SideRow><StoreIcon />应用商店</SideRow>
              <SideRow><AddinIcon />我的加载项<SideCaret /></SideRow>
            </AddinStack>
          </GroupBody>
          <GroupLabel>加载项</GroupLabel>
        </Group>
        <Group $w={292}>
          <GroupBody>
            <Btn w={66} icon={<RecChartIcon />} lines={['推荐的', '图表']} />
            <ChartGrid>
              {smallCharts.map((C, i) => <ChartCell key={i}><C /><Caret /></ChartCell>)}
            </ChartGrid>
            <Btn w={87} icon={<PivotChartIcon />} lines={['数据透视图']} caret />
          </GroupBody>
          <GroupLabel $shift={22}>图表</GroupLabel>
          <Launcher width="10" height="10" viewBox="0 0 10 10" fill="none">
            <path d="M.5 9V.5H9M4 4l5 5M9 5v4H5" stroke="#777" />
          </Launcher>
        </Group>
        <Group $w={68}>
          <GroupBody>
            <Btn w={67} icon={<MapIcon />} lines={['三维地', '图']} caret="图" />
          </GroupBody>
          <GroupLabel>演示</GroupLabel>
        </Group>
        <Group $w={186}>
          <GroupBody>
            <Btn w={67} icon={<LineSpark />} lines={['折线图']} />
            <Btn w={52} icon={<ColSpark />} lines={['柱形图']} />
            <Btn w={66} icon={<WinSpark />} lines={['盈亏']} />
          </GroupBody>
          <GroupLabel>迷你图</GroupLabel>
        </Group>
        <Group $w={127}>
          <GroupBody>
            <Btn w={66} icon={<SlicerIcon />} lines={['切片器']} />
            <Btn w={52} icon={<TimelineIcon />} lines={['日程表']} />
          </GroupBody>
          <GroupLabel>筛选器</GroupLabel>
        </Group>
        <Group $w={68}>
          <GroupBody>
            <Btn w={67} icon={<LinkIcon />} lines={['超链接']} />
          </GroupBody>
          <GroupLabel>链接</GroupLabel>
        </Group>
        <Group $w={269}>
          <GroupBody>
            <Btn w={65} icon={<TextBoxIcon />} lines={['文本框']} caret />
            <Btn w={90} icon={<HeaderFooterIcon />} lines={['页眉和页脚']} />
            <TextStack>
              <TextRow><TextIcon><ArtIcon /></TextIcon>艺术字<SideCaret $gap={5} /></TextRow>
              <TextRow><TextIcon><SignIcon /></TextIcon>签名行<SideCaret $gap={10} /></TextRow>
              <TextRow><TextIcon><ObjectIcon /></TextIcon>对象</TextRow>
            </TextStack>
          </GroupBody>
          <GroupLabel>文本</GroupLabel>
        </Group>
        <Group $w={30} $last>
          <GroupBody $pad={15}>
            <Item $w={36}>
              <IconSlot><PiIcon /></IconSlot>
              <ItemLine>公式</ItemLine>
            </Item>
          </GroupBody>
        </Group>
      </Ribbon>

      <FormulaBand>
        <NameBox>P5<Caret /></NameBox>
        <BarDots><BarDot /><BarDot /><BarDot /></BarDots>
        <FxBox><CrossIcon /><CheckIcon /><FxLabel>fx</FxLabel></FxBox>
        <FormulaInput />
      </FormulaBand>

      <ColumnBar>
        <Corner>
          <svg width="20" height="20" viewBox="0 0 20 20"><path d="M20 0V20H0z" fill="#b4b4b4" /></svg>
        </Corner>
        {COLS.map(c => <ColHead key={c} $w={c === 'C' ? 166 : 104} $sel={c === 'P'}>{c}</ColHead>)}
      </ColumnBar>

      <Sheet>
        <Grid>
          {Array.from({ length: 15 }, (_, i) => i + 1).map(r => (
            <React.Fragment key={r}>
              <RowHead $sel={r === 5}>{r}</RowHead>
              {COLS.map(c => {
                const { text, ...props } = cellFor(c, r);
                return (
                  <Cell key={c} {...props}>
                    {text}
                    {c === 'P' && r === 5 && <Selection><Handle /></Selection>}
                  </Cell>
                );
              })}
            </React.Fragment>
          ))}
        </Grid>
        <BarCard><BarChart /></BarCard>
        <RedFrame><ComboCard><ComboChart /></ComboCard></RedFrame>
      </Sheet>

      <BottomBar>
        <TabNav><NavArrow /><NavArrow $right /></TabNav>
        <TabRule />
        <SheetTab $w={143}>人力资源情况</SheetTab>
        <SheetTab $w={84} $active>分析表</SheetTab>
        <SheetTab $w={95}>分析表2</SheetTab>
        <TabRule />
        <SheetTab $w={91}>Sheet2</SheetTab>
        <TabRule />
        <AddSheet width="21" height="21" viewBox="0 0 21 21" fill="none">
          <circle cx="10.500" cy="10.500" r="9.500" stroke="#777" strokeWidth="1.300" />
          <path d="M10.500 5V16M5 10.500H16" stroke="#777" strokeWidth="1.800" />
        </AddSheet>
        <ScrollArea>
          <ScrollDots><BarDot /><BarDot /><BarDot /></ScrollDots>
          <ScrollTrack>
            <ScrollBtn $w={25}><ScrollArrow /></ScrollBtn>
            <ScrollThumb />
            <ScrollRest />
            <ScrollBtn $w={23} $end><ScrollArrow $right /></ScrollBtn>
          </ScrollTrack>
        </ScrollArea>
      </BottomBar>
    </Page>
  );
}
